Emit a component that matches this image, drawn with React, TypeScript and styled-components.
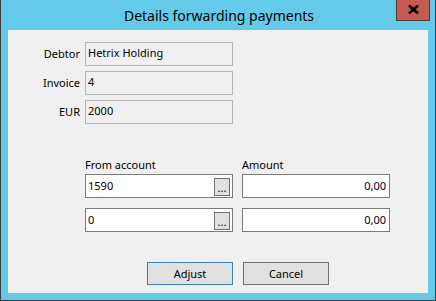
import styled, { createGlobalStyle } from 'styled-components';

const GlobalStyle = createGlobalStyle`
  html, body {
    margin: 0;
    padding: 0;
    background: #ffffff;
  }
  body {
    font-family: "Noto Sans", "Liberation Sans", sans-serif;
  }
`;

const debtorFields = [
  { label: 'Debtor', value: 'Hetrix Holding' },
  { label: 'Invoice', value: '4' },
  { label: 'EUR', value: '2000' },
];

const lines = [
  { account: '1590', amount: '0,00' },
  { account: '0', amount: '0,00' },
];

export default function App() {
  return (
    <>
      <GlobalStyle />
      <Window>
        <TitleBar>
          <Title>Details forwarding payments</Title>
          <CloseButton aria-label="Close">
            <svg width="11" height="9" viewBox="0 0 11 9">
              <path d="M1 0.5 L10 8.5 M10 0.5 L1 8.5" stroke="#000" strokeWidth="2.6" />
            </svg>
          </CloseButton>
        </TitleBar>

        <Client>
          <InfoGrid>
            {debtorFields.map(f => (
              <InfoRow key={f.label}>
                <Label>{f.label}</Label>
                <ReadOnlyBox>{f.value}</ReadOnlyBox>
              </InfoRow>
            ))}
          </InfoGrid>

          <LinesGrid>
            <ColHeading>From account</ColHeading>
            <ColHeading>Amount</ColHeading>
            {lines.map((l, i) => (
              <LineRow key={i}>
                <InputBox>
                  <span>{l.account}</span>
                  <BrowseButton>...</BrowseButton>
                </InputBox>
                <InputBox $right>
                  <span>{l.amount}</span>
                </InputBox>
              </LineRow>
            ))}
          </LinesGrid>

          <Actions>
            <PushButton $default>Adjust</PushButton>
            <PushButton>Cancel</PushButton>
          </Actions>
        </Client>
      </Window>
    </>
  );
}

const Window = styled.div`
  width: 436px;
  height: 301px;
  box-sizing: border-box;
  background: #63cbe9;
  border: 1px solid #3d3d3d;
  border-top: none;
  padding: 0 7px 7px 7px;
  display: flex;
  flex-direction: column;
`;

const TitleBar = styled.div`
  height: 30px;
  flex-shrink: 0;
  display: flex;
  align-items: flex-start;
  justify-content: center;
  position: relative;
`;

const Title = styled.div`
  font-family: "Noto Sans", "Open Sans", sans-serif;
  font-size: 14px;
  line-height: 31px;
  color: #000;
  padding-left: 2px;
`;

const CloseButton = styled.div`
  position: absolute;
  top: 0;
  right: -2px;
  width: 34px;
  height: 21px;
  box-sizing: border-box;
  background: #c45a50;
  border: 1px solid #4a3a38;
  border-top: none;
  display: flex;
  align-items: center;
  justify-content: center;
  padding-bottom: 1px;
`;

const Client = styled.div`
  flex: 1;
  background: #f0f0f0;
  box-sizing: border-box;
  display: flex;
  flex-direction: column;
  padding-top: 12px;
  font-size: 11px;
  color: #000;
`;

const InfoGrid = styled.div`
  display: flex;
  flex-direction: column;
  gap: 5px;
`;

const InfoRow = styled.div`
  display: grid;
  grid-template-columns: 72px 148px;
  column-gap: 5px;
  align-items: center;
`;

const Label = styled.div`
  text-align: right;
  padding-bottom: 2px;
`;

const ReadOnlyBox = styled.div`
  height: 24px;
  box-sizing: border-box;
  border: 1px solid #b4b4b4;
  background: #f0f0f0;
  padding: 0 2px;
  line-height: 19px;
  white-space: nowrap;
  overflow: hidden;
`;

const LinesGrid = styled.div`
  margin-top: 34px;
  margin-left: 77px;
  display: grid;
  grid-template-columns: 148px 148px;
  column-gap: 9px;
  row-gap: 10px;
`;

const ColHeading = styled.div`
  line-height: 14px;
  margin-bottom: -8px;
`;

const LineRow = styled.div`
  display: contents;
`;

const InputBox = styled.div<{ $right?: boolean }>`
  height: 24px;
  box-sizing: border-box;
  border: 1px solid #7a7a7a;
  background: #ffffff;
  display: flex;
  align-items: center;
  justify-content: ${p => (p.$right ? 'flex-end' : 'space-between')};
  padding: 0 2px 0 2px;
  padding-right: ${p => (p.$right ? '3px' : '2px')};
  padding-bottom: 2px;
`;

const BrowseButton = styled.div`
  width: 16px;
  height: 18px;
  box-sizing: border-box;
  background: #e1e1e1;
  border: 1px solid #707070;
  font-size: 11px;
  line-height: 18px;
  text-align: center;
  margin-top: 4px;
`;

const Actions = styled.div`
  margin-top: 30px;
  margin-left: 139px;
  display: flex;
  gap: 10px;
`;

const PushButton = styled.button<{ $default?: boolean }>`
  width: 86px;
  height: 23px;
  box-sizing: border-box;
  background: #e1e1e1;
  border: 1px solid ${p => (p.$default ? '#3c7fb1' : '#707070')};
  font-family: "Noto Sans", "Liberation Sans", sans-serif;
  font-size: 11px;
  color: #000;
  padding: 0;
  cursor: pointer;
`;
